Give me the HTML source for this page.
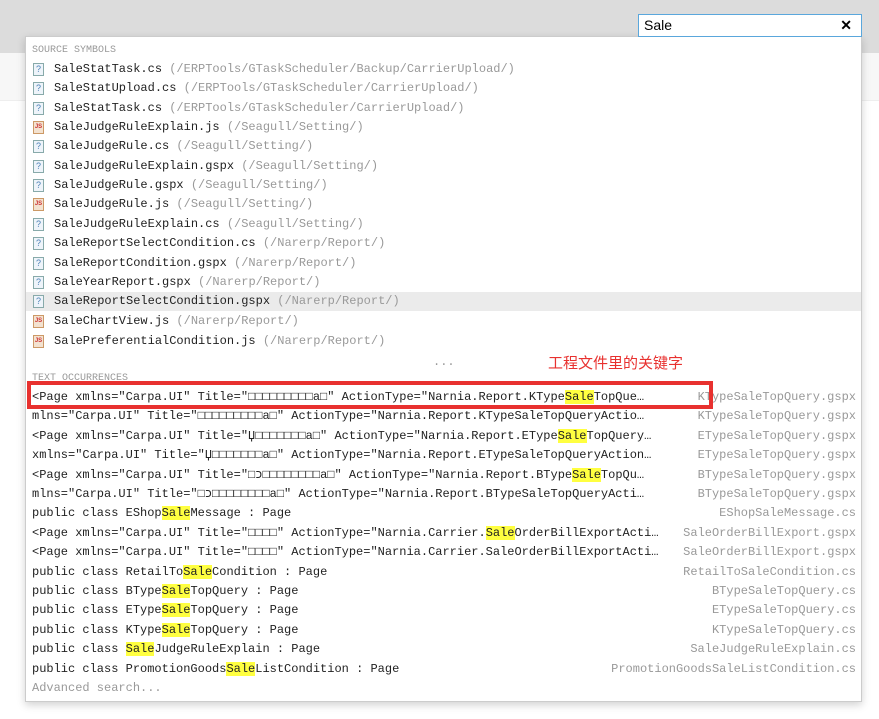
<!DOCTYPE html>
<html><head><meta charset="utf-8"><style>
*{margin:0;padding:0;box-sizing:border-box}
body{width:879px;height:719px;background:#fff;position:relative;overflow:hidden;font-family:"Liberation Mono","Noto Sans CJK SC",monospace;font-size:12px}
.top{position:absolute;left:0;top:0;width:879px;height:53px;background:#dcdcdc}
.strip{position:absolute;left:0;top:53px;width:879px;height:48px;background:#f7f7f7;border-bottom:1px solid #eee}
.search{position:absolute;left:638px;top:14px;width:224px;height:23px;background:#fff;border:1px solid #5aa7dc;font-family:"Liberation Sans",sans-serif;font-size:14px;padding:2px 5px;color:#000}
.search b{position:absolute;right:9px;top:2px;font-weight:bold;font-size:14px}
.pop{position:absolute;left:25px;top:36px;width:837px;height:666px;background:#fff;border:1px solid #ccc;box-shadow:0 3px 8px rgba(0,0,0,.18)}
.lbl{position:absolute;left:6px;font-size:10px;color:#999}
.r{position:absolute;left:0;width:835px;height:19px;line-height:19px;white-space:nowrap;color:#222}
.s .n{position:absolute;left:28px}
.g{color:#999}
.ic{position:absolute;left:7px;top:3px;width:11px;height:13px;border:1px solid #8aa;background:#eef4fa;font-size:9px;line-height:11px;text-align:center;color:#4a7fb5;font-family:"Liberation Sans",sans-serif}
.js{border-color:#c96;background:#f3e2d0;color:#c33;font-weight:bold;font-size:6px}
.hl{background:#ebebeb}
.t .a{position:absolute;left:6px;width:660px;overflow:hidden}
.t .f{position:absolute;right:5px;color:#999}
.y{background:#ffff40}
.red{position:absolute;left:27px;top:381px;width:686px;height:28px;border:4px solid #e8312f}
.cn{position:absolute;left:548px;top:352px;color:#e8312f;font-family:"Noto Sans CJK SC",sans-serif;font-size:15px}
</style></head><body>
<div class="top"></div><div class="strip"></div>
<div class="pop">
<div class="lbl" style="top:8px">SOURCE SYMBOLS</div>
<div class="r s" style="top:23px"><span class="ic">?</span><span class="n">SaleStatTask.cs <span class="g">(/ERPTools/GTaskScheduler/Backup/CarrierUpload/)</span></span></div>
<div class="r s" style="top:42px"><span class="ic">?</span><span class="n">SaleStatUpload.cs <span class="g">(/ERPTools/GTaskScheduler/CarrierUpload/)</span></span></div>
<div class="r s" style="top:62px"><span class="ic">?</span><span class="n">SaleStatTask.cs <span class="g">(/ERPTools/GTaskScheduler/CarrierUpload/)</span></span></div>
<div class="r s" style="top:81px"><span class="ic js">JS</span><span class="n">SaleJudgeRuleExplain.js <span class="g">(/Seagull/Setting/)</span></span></div>
<div class="r s" style="top:100px"><span class="ic">?</span><span class="n">SaleJudgeRule.cs <span class="g">(/Seagull/Setting/)</span></span></div>
<div class="r s" style="top:120px"><span class="ic">?</span><span class="n">SaleJudgeRuleExplain.gspx <span class="g">(/Seagull/Setting/)</span></span></div>
<div class="r s" style="top:139px"><span class="ic">?</span><span class="n">SaleJudgeRule.gspx <span class="g">(/Seagull/Setting/)</span></span></div>
<div class="r s" style="top:158px"><span class="ic js">JS</span><span class="n">SaleJudgeRule.js <span class="g">(/Seagull/Setting/)</span></span></div>
<div class="r s" style="top:178px"><span class="ic">?</span><span class="n">SaleJudgeRuleExplain.cs <span class="g">(/Seagull/Setting/)</span></span></div>
<div class="r s" style="top:197px"><span class="ic">?</span><span class="n">SaleReportSelectCondition.cs <span class="g">(/Narerp/Report/)</span></span></div>
<div class="r s" style="top:217px"><span class="ic">?</span><span class="n">SaleReportCondition.gspx <span class="g">(/Narerp/Report/)</span></span></div>
<div class="r s" style="top:236px"><span class="ic">?</span><span class="n">SaleYearReport.gspx <span class="g">(/Narerp/Report/)</span></span></div>
<div class="r s hl" style="top:255px"><span class="ic">?</span><span class="n">SaleReportSelectCondition.gspx <span class="g">(/Narerp/Report/)</span></span></div>
<div class="r s" style="top:275px"><span class="ic js">JS</span><span class="n">SaleChartView.js <span class="g">(/Narerp/Report/)</span></span></div>
<div class="r s" style="top:295px"><span class="ic js">JS</span><span class="n">SalePreferentialCondition.js <span class="g">(/Narerp/Report/)</span></span></div>
<div class="r g" style="top:316px;left:407px;width:30px">...</div>
<div class="lbl" style="top:336px">TEXT OCCURRENCES</div>
<div class="r t" style="top:351px"><span class="a">&lt;Page xmlns="Carpa.UI" Title="□□□□□□□□□a□" ActionType="Narnia.Report.KType<span class="y">Sale</span>TopQue…</span><span class="f">KTypeSaleTopQuery.gspx</span></div>
<div class="r t" style="top:370px"><span class="a">mlns="Carpa.UI" Title="□□□□□□□□□a□" ActionType="Narnia.Report.KTypeSaleTopQueryActio…</span><span class="f">KTypeSaleTopQuery.gspx</span></div>
<div class="r t" style="top:390px"><span class="a">&lt;Page xmlns="Carpa.UI" Title="Џ□□□□□□□a□" ActionType="Narnia.Report.EType<span class="y">Sale</span>TopQuery…</span><span class="f">ETypeSaleTopQuery.gspx</span></div>
<div class="r t" style="top:409px"><span class="a">xmlns="Carpa.UI" Title="Џ□□□□□□□a□" ActionType="Narnia.Report.ETypeSaleTopQueryAction…</span><span class="f">ETypeSaleTopQuery.gspx</span></div>
<div class="r t" style="top:429px"><span class="a">&lt;Page xmlns="Carpa.UI" Title="□כ□□□□□□□□a□" ActionType="Narnia.Report.BType<span class="y">Sale</span>TopQu…</span><span class="f">BTypeSaleTopQuery.gspx</span></div>
<div class="r t" style="top:448px"><span class="a">mlns="Carpa.UI" Title="□כ□□□□□□□□a□" ActionType="Narnia.Report.BTypeSaleTopQueryActi…</span><span class="f">BTypeSaleTopQuery.gspx</span></div>
<div class="r t" style="top:467px"><span class="a">public class EShop<span class="y">Sale</span>Message : Page</span><span class="f">EShopSaleMessage.cs</span></div>
<div class="r t" style="top:487px"><span class="a">&lt;Page xmlns="Carpa.UI" Title="□□□□" ActionType="Narnia.Carrier.<span class="y">Sale</span>OrderBillExportActi…</span><span class="f">SaleOrderBillExport.gspx</span></div>
<div class="r t" style="top:506px"><span class="a">&lt;Page xmlns="Carpa.UI" Title="□□□□" ActionType="Narnia.Carrier.SaleOrderBillExportActi…</span><span class="f">SaleOrderBillExport.gspx</span></div>
<div class="r t" style="top:526px"><span class="a">public class RetailTo<span class="y">Sale</span>Condition : Page</span><span class="f">RetailToSaleCondition.cs</span></div>
<div class="r t" style="top:545px"><span class="a">public class BType<span class="y">Sale</span>TopQuery : Page</span><span class="f">BTypeSaleTopQuery.cs</span></div>
<div class="r t" style="top:564px"><span class="a">public class EType<span class="y">Sale</span>TopQuery : Page</span><span class="f">ETypeSaleTopQuery.cs</span></div>
<div class="r t" style="top:584px"><span class="a">public class KType<span class="y">Sale</span>TopQuery : Page</span><span class="f">KTypeSaleTopQuery.cs</span></div>
<div class="r t" style="top:603px"><span class="a">public class <span class="y">Sale</span>JudgeRuleExplain : Page</span><span class="f">SaleJudgeRuleExplain.cs</span></div>
<div class="r t" style="top:623px"><span class="a">public class PromotionGoods<span class="y">Sale</span>ListCondition : Page</span><span class="f">PromotionGoodsSaleListCondition.cs</span></div>
<div class="r t g" style="top:642px"><span class="a">Advanced search...</span></div>
</div>
<div class="search">Sale<b>✕</b></div>
<div class="red"></div>
<div class="cn">工程文件里的关键字</div>
</body></html>
